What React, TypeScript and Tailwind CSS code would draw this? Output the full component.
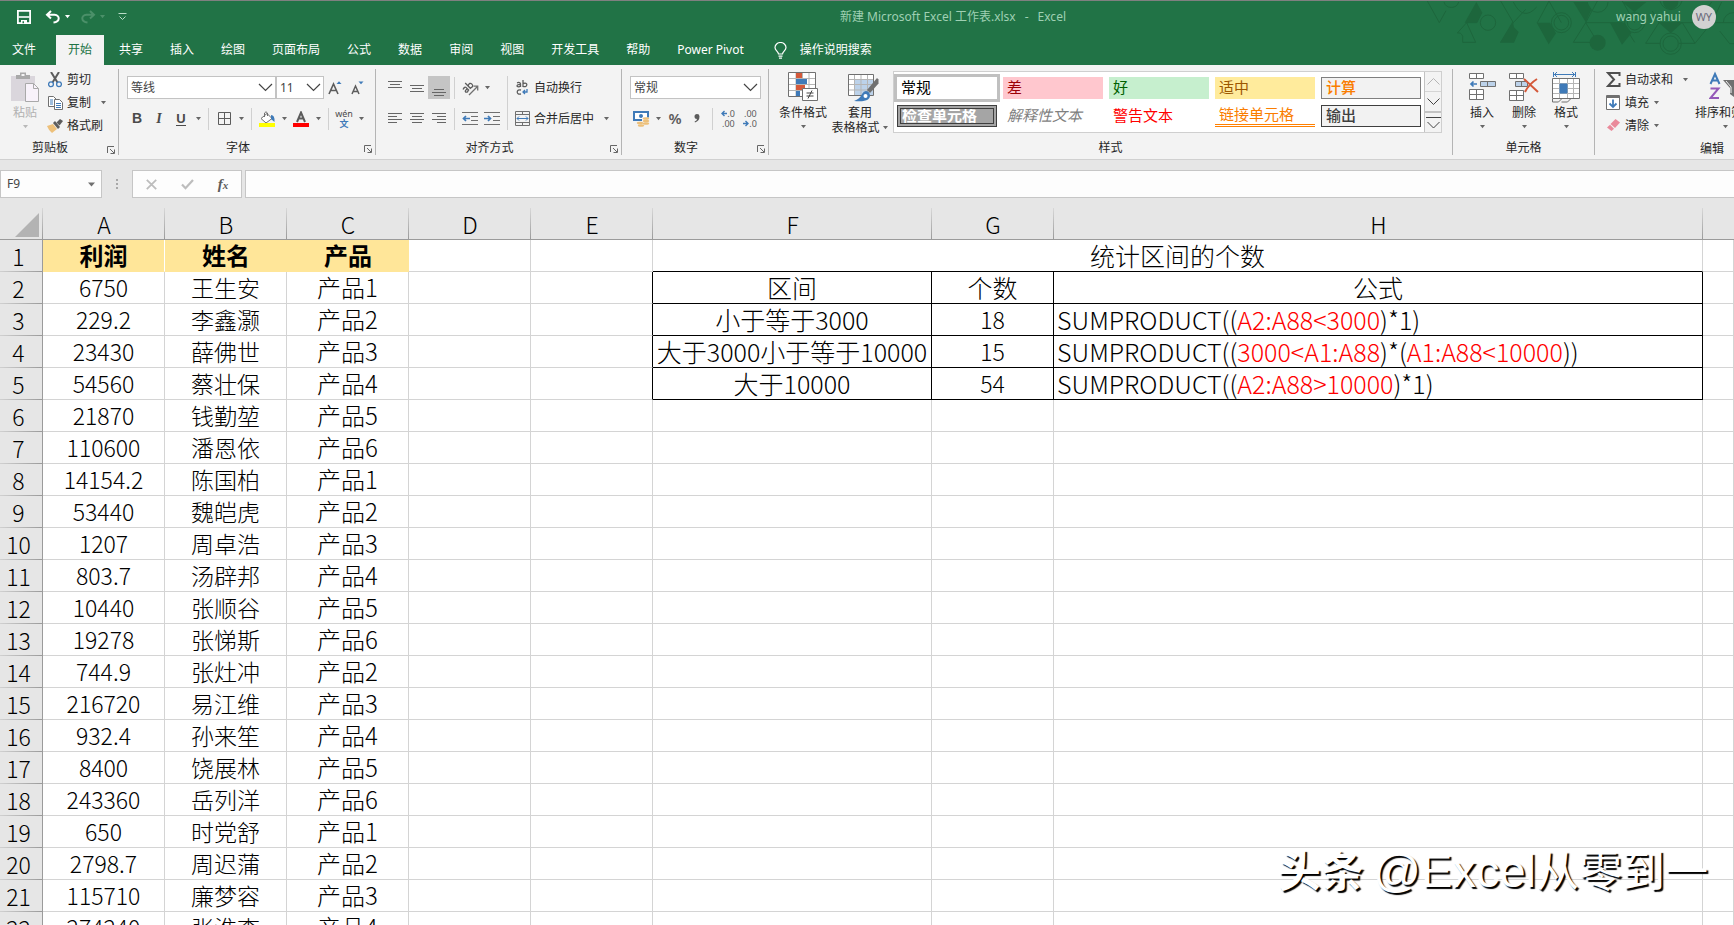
import React from "react";

const uiFont = "font-['Noto_Sans','Noto_Sans_CJK_SC',sans-serif]";
const sheetFont = "font-['Noto_Sans_CJK_SC',sans-serif]";

/* ---------- small shared pieces ---------- */

function Caret({ color = "#666" }: { color?: string }) {
  return (
    <svg width="7" height="4" viewBox="0 0 7 4" aria-hidden="true">
      <path d="M1 0h5L3.500 3.200z" fill={color} />
    </svg>
  );
}

function CaretButton({ label }: { label: string }) {
  return (
    <button aria-label={label} className="flex h-[22px] w-[12px] items-center justify-center">
      <Caret />
    </button>
  );
}

function Tool({ label, active, children }: { label: string; active?: boolean; children: React.ReactNode }) {
  return (
    <button
      aria-label={label}
      className={
        active
          ? "flex h-[23px] w-[22px] items-center justify-center bg-[#c5c5c5]"
          : "flex h-[23px] w-[22px] items-center justify-center"
      }
    >
      {children}
    </button>
  );
}

function Sep() {
  return <span className="mx-[4px] h-[22px] w-px bg-[#d0d0d0]" />;
}

function Divider() {
  return <span className="mt-[4px] h-[86px] w-px shrink-0 bg-[#b4b4b4]" />;
}

function Launcher() {
  return (
    <svg width="10" height="10" viewBox="0 0 10 10" fill="none" stroke="#666" aria-hidden="true">
      <path d="M1.500 8V1.500H8" />
      <path d="M4 4l4 4M8.500 4.500v4h-4" />
    </svg>
  );
}

function Group({
  label,
  launcher,
  className,
  children,
}: {
  label: string;
  launcher?: boolean;
  className: string;
  children: React.ReactNode;
}) {
  return (
    <section aria-label={label} className={`flex flex-col ${className}`}>
      <div className="h-[72px]">{children}</div>
      <div className="flex h-[23px] items-center">
        <span className="flex-1 text-center leading-[16px]">{label}</span>
        {launcher && (
          <button aria-label={`${label}设置`} className="flex w-[18px] justify-end pt-[3px] pr-[2px]">
            <Launcher />
          </button>
        )}
      </div>
    </section>
  );
}

function Dropdown({ label, value, className }: { label: string; value: string; className: string }) {
  return (
    <span className={`relative flex h-[23px] ${className}`}>
      <select
        aria-label={label}
        defaultValue={value}
        className="h-full w-full appearance-none border border-[#c3c3c3] bg-white pl-[3px] text-[12px] leading-[16px] text-[#444]"
      >
        <option>{value}</option>
      </select>
      <svg
        className="pointer-events-none absolute top-[7px] right-[3px]"
        width="15"
        height="9"
        viewBox="0 0 15 9"
        fill="none"
        stroke="#444"
        strokeWidth="1.200"
        aria-hidden="true"
      >
        <path d="M1 1l6.500 6.500L14 1" />
      </svg>
    </span>
  );
}

function BigButton({
  icon,
  lines,
  className,
  caretInline,
  muted,
}: {
  icon: React.ReactNode;
  lines: string[];
  className: string;
  caretInline?: boolean;
  muted?: boolean;
}) {
  return (
    <button className={`flex shrink-0 flex-col items-center pt-[6px] ${muted ? "text-[#b1b1b1]" : ""} ${className}`}>
      <span className="flex h-[34px] items-start justify-center">{icon}</span>
      {lines.map((line, i) => (
        <span key={line} className="flex items-center gap-[2px] leading-[15px] whitespace-nowrap">
          {line}
          {caretInline && i === lines.length - 1 && <Caret />}
        </span>
      ))}
      {!caretInline && (
        <span className="flex h-[14px] items-center">
          <Caret color={muted ? "#b8b8b8" : "#666"} />
        </span>
      )}
    </button>
  );
}

function SmallButton({ icon, text, caret }: { icon: React.ReactNode; text: string; caret?: "near" | "far" }) {
  return (
    <button className="flex h-[23px] items-center gap-[4px] leading-[16px] whitespace-nowrap">
      <span className="flex w-[16px] justify-center">{icon}</span>
      <span>{text}</span>
      {caret && (
        <span className={caret === "far" ? "ml-[5px]" : ""}>
          <Caret />
        </span>
      )}
    </button>
  );
}

function Lines({ rows, valign }: { rows: [number, number][]; valign: "top" | "middle" | "bottom" | "full" }) {
  const start = { top: 1, middle: 5, bottom: 9, full: 2 }[valign];
  return (
    <svg width="14" height="16" viewBox="0 0 14 16" stroke="#666" aria-hidden="true">
      {rows.map(([a, b], i) => (
        <path key={i} d={`M${a} ${start + i * 3 + 0.5}H${b}`} />
      ))}
    </svg>
  );
}

function Indent({ out }: { out?: boolean }) {
  return (
    <svg width="16" height="14" viewBox="0 0 16 14" fill="none" aria-hidden="true">
      <path d="M0 .5h16M9 4.500h7M9 8.500h7M0 12.500h16" stroke="#707070" />
      <path
        d={out ? "M8 6.500H1.500M4 4L1.500 6.500 4 9" : "M0 6.500h6.500M4 4l2.500 2.500L4 9"}
        stroke="#3f7ab8"
        strokeWidth="1.700"
      />
    </svg>
  );
}

/* ---------- title bar and tabs ---------- */

function TitlePattern() {
  return (
    <svg
      className="pointer-events-none absolute top-0 right-0"
      width="340"
      height="60"
      viewBox="0 0 1020 180"
      fill="none"
      stroke="#1d663c"
      strokeWidth="3"
      aria-hidden="true"
    >
      <path d="M100 0l36 65 20-36M150 3a23 23 0 0 0 44 0" />
      <path d="M245 124h-39v-18q-4-12-16-10l28-31zM218 65h30M320 0l38 65-38 59M358 65l37-40M465 0l-35 65M465 0l37 65M538 124l37-59 36 59zM575 65L610 0" />
      <path d="M575 65h110l37 59M722 65L685 0M755 127l40-62h60M755 127h45M795 65l-20-35M850 65h60l-12-22M855 127h48l50-62h67M903 127l-38-62M977 90l30 38h13M953 65l30-62M910 65l43-62M358 3q30 60 70 15" />
      <circle cx="282" cy="65" r="23" />
      <circle cx="502" cy="65" r="30" />
      <circle cx="502" cy="65" r="22" />
      <circle cx="722" cy="65" r="30" />
      <circle cx="722" cy="65" r="22" />
      <circle cx="830" cy="128" r="32" />
      <circle cx="830" cy="128" r="23" />
      <path d="M580 3a31 31 0 0 0 62 0M798 0a34 34 0 0 0 66 0M988 65a30 30 0 0 1 32-30" />
      <g fill="#1d663c" stroke="none">
        <path d="M212 65L247 3l18 32-15 30zM318 125l38-64 4 18 14 14-14 32zM428 65h40l18 32-22 33zM538 3h40l15 22-18 38zM685 3h72l-36 30zM648 65h44l20 32-28 34zM795 65h70l-35 32z" />
        <circle cx="611" cy="125" r="24" />
        <circle cx="830" cy="2" r="23" />
      </g>
    </svg>
  );
}

function TitleBar() {
  return (
    <div className="flex h-[34px] items-center pb-[2px] text-[#9fd0b3]">
      <div className="flex w-[290px] items-center pl-[17px]">
        <button aria-label="保存">
          <svg width="14" height="14" viewBox="0 0 14 14" fill="none" stroke="#fff" aria-hidden="true">
            <path d="M.9 .9h12.200v12.200H.9z" strokeWidth="1.800" />
            <path d="M1.500 7h11" strokeWidth="1.600" />
            <path d="M4 14v-4h6v4" fill="#fff" stroke="none" />
            <path d="M5.500 11.200h1.500v2h-1.500z" fill="#217346" stroke="none" />
          </svg>
        </button>
        <button aria-label="撤消" className="ml-[14px] flex items-center gap-[3px]">
          <svg width="16" height="14" viewBox="0 0 16 14" fill="none" stroke="#fff" strokeWidth="2" aria-hidden="true">
            <path d="M6 1L2 4.800l4 3.700M2 4.800h7.500c6 .5 5.500 7-1 7.700" />
          </svg>
          <Caret color="#fff" />
        </button>
        <button aria-label="恢复" className="ml-[9px] flex items-center gap-[3px]">
          <svg width="16" height="14" viewBox="0 0 16 14" fill="none" stroke="#4b9069" strokeWidth="2" aria-hidden="true">
            <path d="M10 1l4 3.800-4 3.700M14 4.800H6.500c-6 .5-5.500 7 1 7.700" />
          </svg>
          <Caret color="#4b9069" />
        </button>
        <button aria-label="自定义快速访问工具栏" className="ml-[12px]">
          <svg width="9" height="8" viewBox="0 0 9 8" fill="none" stroke="#b9dcc7" aria-hidden="true">
            <path d="M.5 .5h8M1.500 3.500l3 3 3-3" />
          </svg>
        </button>
      </div>
      <h1 className="flex flex-1 justify-center gap-[9px] leading-[16px] whitespace-nowrap">
        <span>新建 Microsoft Excel 工作表.xlsx</span>
        <span>-</span>
        <span>Excel</span>
      </h1>
      <div className="flex w-[118px] items-center gap-[11px]">
        <span className="leading-[16px] whitespace-nowrap">wang yahui</span>
        <span className="flex size-[24px] items-center justify-center rounded-full bg-[#d2d2d2] text-[11px] text-[#6b6b7b]">
          WY
        </span>
      </div>
    </div>
  );
}

const tabs = ["共享", "插入", "绘图", "页面布局", "公式", "数据", "审阅", "视图", "开发工具", "帮助", "Power Pivot"];

function Tabs() {
  return (
    <nav className="flex h-[30px] items-stretch gap-[3px] text-white">
      <button className="mr-[5px] px-[12px]">文件</button>
      <button className="bg-[#f3f3f3] px-[12px] text-[#217346]">开始</button>
      {tabs.map((t) => (
        <button key={t} className="px-[12px] whitespace-nowrap">
          {t}
        </button>
      ))}
      <button className="flex items-center gap-[13px] px-[15px] whitespace-nowrap">
        <svg width="13" height="17" viewBox="0 0 13 17" fill="none" stroke="#fff" strokeWidth="1.200" aria-hidden="true">
          <path d="M4.500 12c0-2.500-3.500-3.500-3.500-6.500a5.500 5 0 0 1 11 0c0 3-3.500 4-3.500 6.500zM4.500 14.200h4M5 16.200h3" />
        </svg>
        操作说明搜索
      </button>
    </nav>
  );
}

/* ---------- ribbon groups ---------- */

function ClipboardGroup() {
  return (
    <Group label="剪贴板" launcher className="w-[118px] shrink-0">
      <div className="flex">
        <BigButton
          className="ml-[4px] w-[42px]"
          muted
          lines={["粘贴"]}
          icon={
            <svg width="28" height="32" viewBox="0 0 28 32" aria-hidden="true">
              <path d="M0 5h24v25H0z" fill="#dad6dc" />
              <path d="M5 4h4V1.500h6V4h4v4H5z" fill="#a9a9a9" />
              <path d="M10.500 3h3v2h-3z" fill="#f3f3f3" />
              <path d="M14.500 12.500h8l5 5v13h-13z" fill="#f8f2fa" stroke="#a9a9a9" />
              <path d="M22.500 12.500v5h5" fill="none" stroke="#a9a9a9" />
            </svg>
          }
        />
        <div className="flex flex-col items-start pt-[3px] pl-px">
          <SmallButton
            text="剪切"
            icon={
              <svg width="14" height="16" viewBox="0 0 14 16" fill="none" aria-hidden="true">
                <path d="M3 0l6.500 10.500M11 0L4.500 10.500" stroke="#5c5c5c" strokeWidth="2" />
                <circle cx="3" cy="12.300" r="2.400" stroke="#3f7ab8" strokeWidth="1.300" />
                <circle cx="11" cy="12.300" r="2.400" stroke="#3f7ab8" strokeWidth="1.300" />
              </svg>
            }
          />
          <SmallButton
            text="复制"
            caret="far"
            icon={
              <svg width="15" height="14" viewBox="0 0 15 14" aria-hidden="true">
                <path d="M.5 .5h5l3 3v7h-8z" fill="#fff" stroke="#707070" />
                <path d="M2 4h3M2 6h3M2 8h3" stroke="#3f7ab8" />
                <path d="M6.500 3.500h5l3 3v7h-8z" fill="#fff" stroke="#707070" />
                <path d="M8 7.500h5M8 9.500h5M8 11.500h5" stroke="#3f7ab8" />
              </svg>
            }
          />
          <SmallButton
            text="格式刷"
            icon={
              <svg width="16" height="14" viewBox="0 0 16 14" aria-hidden="true">
                <path d="M0 7l6-2 4 5-5 4q-3-2-5-7z" fill="#edc07a" />
                <path d="M6 4l2-2 5 6-2 2z" fill="#5c5c5c" />
                <path d="M9.500 3.500L13 0l3 2-3.500 4.500z" fill="#5c5c5c" />
              </svg>
            }
          />
        </div>
      </div>
    </Group>
  );
}

function FontGroup() {
  return (
    <Group label="字体" launcher className="w-[256px] shrink-0">
      <div className="flex flex-col gap-[8px] pt-[11px]">
        <div className="flex items-center pl-[8px]">
          <Dropdown label="字体" value="等线" className="w-[149px]" />
          <Dropdown label="字号" value="11" className="w-[48px]" />
          <Tool label="增大字号">
            <svg width="14" height="14" viewBox="0 0 14 14" aria-hidden="true">
              <path d="M1 13L5.500 3 10 13M2.500 9.500h6" fill="none" stroke="#5c5c5c" strokeWidth="1.600" />
              <path d="M8.500 3h5L11 .3z" fill="#3f7ab8" />
            </svg>
          </Tool>
          <Tool label="减小字号">
            <svg width="14" height="14" viewBox="0 0 14 14" aria-hidden="true">
              <path d="M2 13l3.500-8L9 13M3 10.500h5" fill="none" stroke="#5c5c5c" strokeWidth="1.500" />
              <path d="M8.500 .5h5L11 3.200z" fill="#3f7ab8" />
            </svg>
          </Tool>
        </div>
        <div className="flex items-center pl-[7px] text-[14px] text-[#4a4a4a]">
          <Tool label="加粗">
            <b className="font-['Liberation_Sans',sans-serif]">B</b>
          </Tool>
          <Tool label="倾斜">
            <b className="font-['Liberation_Serif',serif] italic">I</b>
          </Tool>
          <Tool label="下划线">
            <b className="border-b border-[#4a4a4a] font-['Liberation_Sans',sans-serif] text-[13px] leading-[13px]">U</b>
          </Tool>
          <CaretButton label="下划线选项" />
          <Sep />
          <Tool label="边框">
            <svg width="13" height="13" viewBox="0 0 13 13" fill="none" stroke="#5c5c5c" aria-hidden="true">
              <path d="M.5 .5h12v12H.5zM6.500 .5v12M.5 6.500h12" />
            </svg>
          </Tool>
          <CaretButton label="边框选项" />
          <Sep />
          <Tool label="填充颜色">
            <svg width="16" height="16" viewBox="0 0 16 16" aria-hidden="true">
              <path d="M2 7.500l6-5 5 5-6 4.500z" fill="#fff" stroke="#707070" />
              <path d="M5.500 6V2q1.500-2.500 3 0v3" fill="none" stroke="#707070" />
              <path d="M12 4q4 0 3.500 7L12 8z" fill="#3f7ab8" />
              <path d="M0 12h16v4H0z" fill="#ff0" />
            </svg>
          </Tool>
          <CaretButton label="填充颜色选项" />
          <Tool label="字体颜色">
            <svg width="16" height="16" viewBox="0 0 16 16" aria-hidden="true">
              <path d="M4 11L8 1.500 12 11M5.300 7.500h5.400" fill="none" stroke="#5c5c5c" strokeWidth="2" />
              <path d="M0 12h16v4H0z" fill="#f00" />
            </svg>
          </Tool>
          <CaretButton label="字体颜色选项" />
          <Sep />
          <Tool label="拼音">
            <span className="flex flex-col items-center text-[9px] leading-[10px]">
              <span>wén</span>
              <span className="font-bold text-[#3f7ab8]">文</span>
            </span>
          </Tool>
          <CaretButton label="拼音选项" />
        </div>
      </div>
    </Group>
  );
}

function AlignGroup() {
  const full: [number, number] = [0, 14];
  const mid: [number, number] = [2, 12];
  return (
    <Group label="对齐方式" launcher className="w-[245px] shrink-0">
      <div className="flex pt-[11px] pl-[8px]">
        <div className="flex w-[123px] flex-col gap-[8px]">
          <div className="flex items-center">
            <Tool label="顶端对齐">
              <Lines valign="top" rows={[full, mid, full]} />
            </Tool>
            <Tool label="垂直居中">
              <Lines valign="middle" rows={[full, mid, full]} />
            </Tool>
            <Tool label="底端对齐" active>
              <Lines valign="bottom" rows={[mid, full, mid]} />
            </Tool>
            <Sep />
            <Tool label="方向">
              <svg width="17" height="16" viewBox="0 0 17 16" fill="none" stroke="#5c5c5c" strokeWidth="1.300" aria-hidden="true">
                <g transform="rotate(-45 6 8)">
                  <path d="M1.500 5.500q3.500-1.200 3.500 1V10.500M5 8Q1.200 7.500 1.500 9.400q1.500 2 3.500-.2" />
                  <path d="M7.500 2.500v8M7.500 6.500q4-1.700 4 1.500t-4 1.800" />
                </g>
                <path d="M7 15L15.500 6.500M11.500 6.200h4.200v4.200" stroke="#707070" />
              </svg>
            </Tool>
            <CaretButton label="方向选项" />
          </div>
          <div className="flex items-center">
            <Tool label="左对齐">
              <Lines valign="full" rows={[full, [0, 9], full, [0, 9]]} />
            </Tool>
            <Tool label="居中">
              <Lines valign="full" rows={[full, mid, full, mid]} />
            </Tool>
            <Tool label="右对齐">
              <Lines valign="full" rows={[full, [5, 14], full, [5, 14]]} />
            </Tool>
            <Sep />
            <Tool label="减少缩进量">
              <Indent out />
            </Tool>
            <Tool label="增加缩进量">
              <Indent />
            </Tool>
          </div>
        </div>
        <span className="w-px bg-[#d0d0d0]" />
        <div className="flex flex-col items-start gap-[8px] pl-[6px]">
          <SmallButton
            text="自动换行"
            icon={
              <svg width="12" height="15" viewBox="0 0 12 15" fill="none" stroke="#5c5c5c" strokeWidth="1.300" aria-hidden="true">
                <path d="M1 2.800q3-1 3.500 1V7M4.500 4.500Q1 4.300 1 6q1.500 1.800 3.500 0M7 0v7M7 3.500q4-1 3.800 1.200Q10.500 7.500 7 6.300M5 10q-3.500-.8-3.800 2 .3 2.800 3.800 2" />
                <path d="M11 9v3H7M9 10l-2 2 2 2" stroke="#3f7ab8" />
              </svg>
            }
          />
          <SmallButton
            text="合并后居中"
            caret="far"
            icon={
              <svg width="15" height="15" viewBox="0 0 15 15" fill="none" stroke="#707070" aria-hidden="true">
                <path d="M.5 .5h14v14H.5zM.5 3.500h14M.5 11.500h14M7.500 .5v3M7.500 11.500v3" />
                <path d="M2 7.500h11M4 5.500l-2 2 2 2M11 5.500l2 2-2 2" stroke="#3f7ab8" />
              </svg>
            }
          />
        </div>
      </div>
    </Group>
  );
}

function NumberGroup() {
  return (
    <Group label="数字" launcher className="w-[146px] shrink-0">
      <div className="flex flex-col gap-[8px] pt-[11px] pl-[8px]">
        <Dropdown label="数字格式" value="常规" className="w-[131px]" />
        <div className="flex items-center text-[#5c5c5c]">
          <Tool label="会计数字格式">
            <svg width="17" height="16" viewBox="0 0 17 16" aria-hidden="true">
              <path d="M1 1h14v8H1z" fill="#fff" stroke="#3f7ab8" strokeWidth="2" />
              <circle cx="8" cy="5" r="2" fill="#3f7ab8" />
              <path d="M9 6.500h7V14H9zM4 10.500h6V16H4z" fill="#f3f3f3" />
              <g fill="#edc07a">
                <ellipse cx="13" cy="7.500" rx="3.200" ry="1.300" />
                <ellipse cx="13" cy="10" rx="3.200" ry="1.300" />
                <ellipse cx="13" cy="12.500" rx="3.200" ry="1.300" />
                <ellipse cx="7" cy="12" rx="3.200" ry="1.300" />
                <ellipse cx="8" cy="14.500" rx="3.200" ry="1.300" />
              </g>
            </svg>
          </Tool>
          <CaretButton label="会计格式选项" />
          <Tool label="百分比样式">
            <span className="text-[15px] font-semibold">%</span>
          </Tool>
          <Tool label="千位分隔样式">
            <svg width="6" height="9" viewBox="0 0 6 9" aria-hidden="true">
              <path d="M3 0a2.500 2.500 0 0 1 2.500 2.600Q5.500 7 1 8.500L.6 7.500Q3 6.500 3 5A2.500 2.500 0 0 1 3 0z" fill="#5c5c5c" />
            </svg>
          </Tool>
          <Sep />
          <Tool label="增加小数位数">
            <span className="flex flex-col items-end text-[9px] leading-[10px]">
              <span className="flex items-center">
                <svg width="6" height="7" viewBox="0 0 6 7" fill="none" stroke="#3f7ab8" strokeWidth="1.400" aria-hidden="true">
                  <path d="M6 3.500H1M3.500 1L1 3.500 3.500 6" />
                </svg>
                .0
              </span>
              <span>.00</span>
            </span>
          </Tool>
          <Tool label="减少小数位数">
            <span className="flex flex-col items-end text-[9px] leading-[10px]">
              <span>.00</span>
              <span className="flex items-center">
                <svg width="6" height="7" viewBox="0 0 6 7" fill="none" stroke="#3f7ab8" strokeWidth="1.400" aria-hidden="true">
                  <path d="M0 3.500h5M2.500 1L5 3.500 2.500 6" />
                </svg>
                .0
              </span>
            </span>
          </Tool>
        </div>
      </div>
    </Group>
  );
}

const cellStyles: { name: string; cls: string }[] = [
  { name: "常规", cls: "bg-white text-black ring-[3px] ring-[#c0c0c0]" },
  { name: "差", cls: "bg-[#ffc7ce] text-[#9c0006]" },
  { name: "好", cls: "bg-[#c6efce] text-[#006100]" },
  { name: "适中", cls: "bg-[#ffeb9c] text-[#9c5700]" },
  { name: "计算", cls: "border border-[#7f7f7f] bg-[#f2f2f2] text-[#fa7d00] font-medium" },
  {
    name: "检查单元格",
    cls: "border border-[#3f3f3f] bg-[#a5a5a5] text-white font-bold outline outline-[#3f3f3f] outline-offset-[-4px]",
  },
  { name: "解释性文本", cls: "text-[#7f7f7f] italic" },
  { name: "警告文本", cls: "text-[#ff0000]" },
  { name: "链接单元格", cls: "border-b-[3px] border-double border-[#ff8001] text-[#fa7d00]" },
  { name: "输出", cls: "border border-[#3f3f3f] bg-[#f2f2f2] text-[#3f3f3f] font-medium" },
];

function StylesGroup() {
  return (
    <Group label="样式" className="min-w-[560px] flex-1">
      <div className="flex pl-[8px]">
        <BigButton
          className="w-[52px]"
          lines={["条件格式"]}
          icon={
            <svg width="30" height="31" viewBox="0 0 30 31" aria-hidden="true">
              <path d="M.5 1.500h27v24H.5z" fill="#fff" stroke="#707070" />
              <path d="M8 2v23M21 2v23M14.500 2v23M1 7.500h26M1 13.500h26M1 19.500h26" stroke="#b5b5b5" />
              <path d="M8 2h6v5H8z" fill="#d4593a" />
              <path d="M8 8h11v5H8z" fill="#3f7ab8" />
              <path d="M8 14h9v5H8z" fill="#d4593a" />
              <path d="M8 20h4v5H8z" fill="#3f7ab8" />
              <path d="M14.500 17.500h15v12h-15z" fill="#fff" stroke="#707070" />
              <path d="M18.500 22h7M18.500 25h7M24 19.500l-4 8" stroke="#444" fill="none" />
            </svg>
          }
        />
        <BigButton
          className="ml-[2px] w-[58px]"
          caretInline
          lines={["套用", "表格格式"]}
          icon={
            <svg width="37" height="31" viewBox="-6 0 37 31" aria-hidden="true">
              <path d="M.5 3.500h25v21H.5z" fill="#fff" stroke="#707070" />
              <path d="M7 9h18v15H7z" fill="#bcd2ea" />
              <path d="M6.500 4v20M13 4v20M19.500 4v20M1 8.500h24M1 13.500h24M1 19h24" stroke="#b5b5b5" fill="none" />
              <path d="M19 19L29 7l1.500 1.500v4L22 22z" fill="#707070" />
              <path d="M6 30q6-2 8-7 3-5 7-1.500 2.500 4-1 7Q16 31 6 30z" fill="#3f7ab8" />
              <circle cx="17.500" cy="25" r="2" fill="#fff" />
            </svg>
          }
        />
        <div className="mt-[6px] mr-[10px] ml-[4px] flex h-[62px] flex-1 border border-[#cfcfcf] bg-white">
          <div className="grid flex-1 grid-cols-5 grid-rows-[22px_22px] gap-[6px] py-[5px] pr-[3px] pl-[3px]">
            {cellStyles.map((s) => (
              <button
                key={s.name}
                className={`flex items-center pb-[2px] pl-[4px] text-[15px] leading-[16px] whitespace-nowrap ${sheetFont} ${s.cls}`}
              >
                {s.name}
              </button>
            ))}
          </div>
          <div className="flex w-[17px] flex-col border-l border-[#c3c3c3] bg-[#f3f3f3]">
            <button aria-label="上一行" className="flex flex-1 items-center justify-center border-b border-[#d5d5d5]">
              <svg width="13" height="7" viewBox="0 0 13 7" fill="none" stroke="#b5b5b5" aria-hidden="true">
                <path d="M.5 6.500l6-6 6 6" />
              </svg>
            </button>
            <button aria-label="下一行" className="flex flex-1 items-center justify-center border-b-2 border-[#c3c3c3]">
              <svg width="13" height="7" viewBox="0 0 13 7" fill="none" stroke="#444" aria-hidden="true">
                <path d="M.5 .5l6 6 6-6" />
              </svg>
            </button>
            <button aria-label="其他样式" className="flex flex-1 items-center justify-center">
              <svg width="15" height="13" viewBox="0 0 15 13" fill="none" stroke="#444" aria-hidden="true">
                <path d="M0 1.500h15M1.500 6l6 6 6-6" />
              </svg>
            </button>
          </div>
        </div>
      </div>
    </Group>
  );
}

function CellsGroup() {
  return (
    <Group label="单元格" className="w-[141px] shrink-0">
      <div className="flex pl-[8px]">
        <BigButton
          className="w-[42px]"
          lines={["插入"]}
          icon={
            <svg width="27" height="30" viewBox="0 0 27 30" fill="#fff" stroke="#707070" aria-hidden="true">
              <path d="M.5 2.500h14v5H.5zM7.500 2.500v5M.5 18.500h14v10H.5zM7.500 18.500v10M.5 23.500h14" />
              <path d="M11.500 10.500h15v5h-15zM18.500 10.500v5" fill="#bcd2ea" />
              <path d="M8 13H2M4.500 10.500L2 13l2.500 2.500" fill="none" stroke="#3f7ab8" strokeWidth="1.700" />
            </svg>
          }
        />
        <BigButton
          className="w-[42px]"
          lines={["删除"]}
          icon={
            <svg width="30" height="30" viewBox="0 0 30 30" fill="#fff" stroke="#707070" aria-hidden="true">
              <path d="M.5 2.500h14v5H.5zM7.500 2.500v5M.5 19.500h14v10H.5zM7.500 19.500v10M.5 24.500h14" />
              <path d="M6.500 10.500h12v5h-12zM12.500 10.500v5" fill="#bcd2ea" />
              <path d="M15 8l14 13M28 8Q20 13 16 21" fill="none" stroke="#d4593a" strokeWidth="2" />
            </svg>
          }
        />
        <BigButton
          className="w-[42px]"
          lines={["格式"]}
          icon={
            <svg width="29" height="32" viewBox="0 0 29 32" fill="none" stroke="#707070" aria-hidden="true">
              <path d="M1.500 1v5M23.500 1v5M2 3.500h21M5 1L2.500 3.500 5 6M20 1l2.500 2.500L20 6" stroke="#3f7ab8" />
              <path d="M.5 7.500h27v20H.5z" fill="#fff" />
              <path d="M7.500 8v19M15.500 8v19M21.500 8v19M1 12.500h26M1 22.500h26M1 17.500h26" stroke="#b5b5b5" />
              <path d="M8 13h7v9H8z" fill="#3f7ab8" stroke="#3f7ab8" />
              <path d="M.5 28v3h6l3-3M9.500 31h6l3-3" />
            </svg>
          }
        />
      </div>
    </Group>
  );
}

function EditGroup() {
  return (
    <Group label="编辑" className="w-[234px] shrink-0">
      <div className="flex pl-[10px]">
        <div className="flex w-[88px] shrink-0 flex-col items-start pt-[3px]">
          <SmallButton
            text="自动求和"
            caret="far"
            icon={
              <svg width="15" height="15" viewBox="0 0 15 15" fill="none" stroke="#4f4f4f" strokeWidth="2" aria-hidden="true">
                <path d="M13.500 4V1H2l6 6.500L2 14h11.500v-3" />
              </svg>
            }
          />
          <SmallButton
            text="填充"
            caret="near"
            icon={
              <svg width="14" height="15" viewBox="0 0 14 15" aria-hidden="true">
                <path d="M.5 .5h13v14H.5z" fill="#fff" stroke="#707070" />
                <path d="M1 1h12v2H1z" fill="#707070" />
                <path d="M7 4.500V12M3.500 8.500L7 12l3.500-3.500" fill="none" stroke="#3f7ab8" strokeWidth="1.800" />
              </svg>
            }
          />
          <SmallButton
            text="清除"
            caret="near"
            icon={
              <svg width="13" height="13" viewBox="0 0 13 13" aria-hidden="true">
                <path d="M8.500 0L13 3.500 8 9 3.500 5z" fill="#ea8a9b" />
                <path d="M3 5.700L7 9.700 4.500 12 0 8.500z" fill="#ea8a9b" />
              </svg>
            }
          />
        </div>
        <BigButton
          className="w-[64px]"
          lines={["排序和筛选"]}
          icon={
            <svg width="33" height="30" viewBox="0 0 33 30" fill="none" aria-hidden="true">
              <path d="M1.500 13L6 3l4.500 10M3 9.500h6" stroke="#3f7ab8" strokeWidth="2" />
              <path d="M1.500 17.500h8l-8 9.500h8.500" stroke="#9459b8" strokeWidth="2" />
              <path d="M14 9h18l-7 8v9l-4-3v-6z" fill="#707070" />
              <path d="M17 10l5 6v6" stroke="#f3f3f3" />
            </svg>
          }
        />
      </div>
    </Group>
  );
}

function Ribbon() {
  return (
    <div className="flex h-[95px] overflow-hidden border-b border-[#d0d0d0] bg-[#f3f3f3] text-[#262626]">
      <ClipboardGroup />
      <Divider />
      <FontGroup />
      <Divider />
      <AlignGroup />
      <Divider />
      <NumberGroup />
      <Divider />
      <StylesGroup />
      <Divider />
      <CellsGroup />
      <Divider />
      <div className="w-[139px] shrink-0 overflow-hidden">
        <EditGroup />
      </div>
    </div>
  );
}

/* ---------- formula bar ---------- */

function FormulaBar() {
  return (
    <div className="flex h-[48px] items-start bg-[#e6e6e6] pt-[10px]">
      <div className="flex h-[28px] w-[102px] shrink-0 items-center border border-[#c6c6c6] bg-[#fdfdfd] pr-[5px]">
        <input
          aria-label="名称框"
          defaultValue="F9"
          className="w-full min-w-0 bg-transparent pl-[6px] text-[12px] text-[#444] outline-none"
        />
        <button aria-label="选择名称">
          <svg width="9" height="5" viewBox="0 0 9 5" aria-hidden="true">
            <path d="M1 .5h7L4.500 4.500z" fill="#707070" />
          </svg>
        </button>
      </div>
      <svg className="mx-[13px] mt-[9px] shrink-0" width="4" height="11" viewBox="0 0 4 11" fill="#a8a8a8" aria-hidden="true">
        <path d="M1 0h2v2H1zM1 4h2v2H1zM1 8h2v2H1z" />
      </svg>
      <div className="flex h-[28px] w-[110px] shrink-0 items-center border border-[#c6c6c6] bg-[#fdfdfd]">
        <button aria-label="取消" className="flex flex-1 justify-center">
          <svg width="11" height="11" viewBox="0 0 11 11" stroke="#bdbdbd" strokeWidth="1.800" aria-hidden="true">
            <path d="M.8 .8l9.400 9.400M10.200 .8L.8 10.200" />
          </svg>
        </button>
        <button aria-label="输入" className="flex flex-1 justify-center">
          <svg width="13" height="11" viewBox="0 0 13 11" fill="none" stroke="#bdbdbd" strokeWidth="2.200" aria-hidden="true">
            <path d="M1 5.500l3.500 3.700L12 1" />
          </svg>
        </button>
        <button
          aria-label="插入函数"
          className="flex flex-1 items-baseline justify-center font-['Liberation_Serif',serif] text-[15px] leading-[18px] font-bold text-[#5c5c5c] italic"
        >
          f<span className="text-[11px]">x</span>
        </button>
      </div>
      <input
        aria-label="编辑栏"
        className="ml-[3px] h-[28px] min-w-0 flex-1 border border-r-0 border-[#c6c6c6] bg-[#fdfdfd] px-[6px] text-[12px] outline-none"
      />
    </div>
  );
}

/* ---------- worksheet ---------- */

const data: [string, string, string][] = [
  ["6750", "王生安", "产品1"],
  ["229.2", "李鑫灏", "产品2"],
  ["23430", "薛佛世", "产品3"],
  ["54560", "蔡壮保", "产品4"],
  ["21870", "钱勤堃", "产品5"],
  ["110600", "潘恩依", "产品6"],
  ["14154.2", "陈国柏", "产品1"],
  ["53440", "魏皑虎", "产品2"],
  ["1207", "周卓浩", "产品3"],
  ["803.7", "汤辟邦", "产品4"],
  ["10440", "张顺谷", "产品5"],
  ["19278", "张悌斯", "产品6"],
  ["744.9", "张灶冲", "产品2"],
  ["216720", "易江维", "产品3"],
  ["932.4", "孙来笙", "产品4"],
  ["8400", "饶展林", "产品5"],
  ["243360", "岳列洋", "产品6"],
  ["650", "时党舒", "产品1"],
  ["2798.7", "周迟蒲", "产品2"],
  ["115710", "廉梦容", "产品3"],
  ["274240", "张淮李", "产品4"],
];

function R({ children }: { children: React.ReactNode }) {
  return <span className="text-[#ff0000]">{children}</span>;
}

const summary: [React.ReactNode, React.ReactNode, React.ReactNode][] = [
  ["区间", "个数", "公式"],
  [
    "小于等于3000",
    "18",
    <>
      SUMPRODUCT((<R>A2:A88&lt;3000</R>)*1)
    </>,
  ],
  [
    "大于3000小于等于10000",
    "15",
    <>
      SUMPRODUCT((<R>3000&lt;A1:A88</R>)*(<R>A1:A88&lt;10000</R>))
    </>,
  ],
  [
    "大于10000",
    "54",
    <>
      SUMPRODUCT((<R>A2:A88&gt;10000</R>)*1)
    </>,
  ],
];

const cell = "h-[32px] border-r border-b border-[#d4d4d4] p-0 pb-[2px] text-center whitespace-nowrap";
const boxed = "h-[32px] border-r border-b border-black p-0 pb-[2px] whitespace-nowrap";
const yellow = "h-[32px] border-b border-[#ffe699] bg-[#ffe699] p-0 pb-[2px] text-center text-[24px] font-bold";
const colHead =
  "h-[32px] border-b border-[#9b9b9b] bg-[#e6e6e6] bg-[linear-gradient(#d8d8d8,#9b9b9b)] bg-[length:1px_100%] bg-right bg-no-repeat p-0 text-center font-light";
const rowHead =
  "h-[32px] border-r border-[#9b9b9b] bg-[#e6e6e6] bg-[linear-gradient(90deg,#d0d0d0,#9b9b9b)] bg-[length:100%_1px] bg-bottom bg-no-repeat p-0 pr-[5px] pb-px text-center font-light";

function Sheet() {
  return (
    <table
      className={`w-full table-fixed border-separate border-spacing-0 bg-white text-[23px] leading-[28px] font-light text-black ${sheetFont}`}
    >
      <colgroup>
        <col className="w-[43px]" />
        <col className="w-[122px]" />
        <col className="w-[122px]" />
        <col className="w-[122px]" />
        <col className="w-[122px]" />
        <col className="w-[122px]" />
        <col className="w-[279px]" />
        <col className="w-[122px]" />
        <col className="w-[649px]" />
        <col />
      </colgroup>
      <thead>
        <tr>
          <th className={colHead} aria-label="全选">
            <svg className="mt-[3px] ml-[15px]" width="24" height="24" viewBox="0 0 24 24" aria-hidden="true">
              <path d="M24 0v24H0z" fill="#b3b3b3" />
            </svg>
          </th>
          {["A", "B", "C", "D", "E", "F", "G", "H"].map((c) => (
            <th key={c} scope="col" className={colHead}>
              {c}
            </th>
          ))}
          <th className="h-[32px] border-b border-[#9b9b9b] bg-[#e6e6e6] p-0" />
        </tr>
      </thead>
      <tbody>
        <tr>
          <th scope="row" className={rowHead}>
            1
          </th>
          <td className={`${yellow} border-r border-r-white`}>利润</td>
          <td className={yellow}>姓名</td>
          <td className={yellow}>产品</td>
          <td className={cell} />
          <td className={cell} />
          <td
            colSpan={3}
            className="h-[32px] border-r border-b border-r-[#d4d4d4] border-b-black p-0 pb-[2px] text-center text-[25px]"
          >
            统计区间的个数
          </td>
          <td className={cell} />
        </tr>
        {data.map((row, i) => {
          const s = summary[i];
          return (
            <tr key={i}>
              <th scope="row" className={rowHead}>
                {i + 2}
              </th>
              <td className={cell}>{row[0]}</td>
              <td className={cell}>{row[1]}</td>
              <td className={`${cell} text-[24px]`}>{row[2]}</td>
              <td className={cell} />
              <td className={s ? `${cell} border-r-black` : cell} />
              {s ? (
                <>
                  <td className={`${boxed} text-center text-[25px]`}>{s[0]}</td>
                  <td className={i === 0 ? `${boxed} text-center text-[25px]` : `${boxed} text-center`}>{s[1]}</td>
                  <td className={i === 0 ? `${boxed} text-center text-[25px]` : `${boxed} pl-[3px] text-left text-[25px]`}>
                    {s[2]}
                  </td>
                </>
              ) : (
                <>
                  <td className={cell} />
                  <td className={cell} />
                  <td className={cell} />
                </>
              )}
              <td className={cell} />
            </tr>
          );
        })}
      </tbody>
    </table>
  );
}

export default function App() {
  return (
    <div className={`relative flex h-screen flex-col overflow-hidden bg-white text-[12px] ${uiFont}`}>
      <header className="relative shrink-0 border-t border-[#808080] bg-[#217346]">
        <TitlePattern />
        <div className="relative">
          <TitleBar />
          <Tabs />
        </div>
      </header>
      <div className="shrink-0">
        <Ribbon />
        <FormulaBar />
      </div>
      <main className="min-h-0 flex-1 overflow-hidden">
        <Sheet />
      </main>
      <div
        className={`pointer-events-none absolute right-[26px] bottom-[26px] text-[43px] leading-[56px] whitespace-nowrap text-white [text-shadow:2px_2px_1px_#000] ${sheetFont}`}
      >
        <b>头条</b> <span className="font-['Liberation_Sans',sans-serif] text-[47px]">@Excel</span>从零到一
      </div>
    </div>
  );
}
